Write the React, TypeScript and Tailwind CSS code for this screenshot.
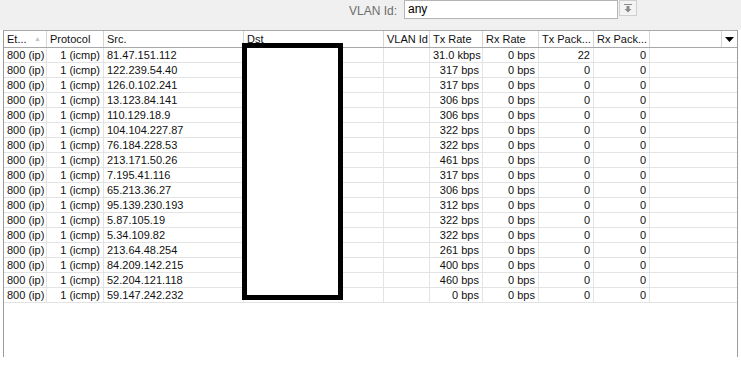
const rows: [string, string, string][] = [
  ['81.47.151.112', '31.0 kbps', '22'],
  ['122.239.54.40', '317 bps', '0'],
  ['126.0.102.241', '317 bps', '0'],
  ['13.123.84.141', '306 bps', '0'],
  ['110.129.18.9', '306 bps', '0'],
  ['104.104.227.87', '322 bps', '0'],
  ['76.184.228.53', '322 bps', '0'],
  ['213.171.50.26', '461 bps', '0'],
  ['7.195.41.116', '317 bps', '0'],
  ['65.213.36.27', '306 bps', '0'],
  ['95.139.230.193', '312 bps', '0'],
  ['5.87.105.19', '322 bps', '0'],
  ['5.34.109.82', '322 bps', '0'],
  ['213.64.48.254', '261 bps', '0'],
  ['84.209.142.215', '400 bps', '0'],
  ['52.204.121.118', '460 bps', '0'],
  ['59.147.242.232', '0 bps', '0'],
];

const cols = 'grid grid-cols-[43px_57px_140px_140px_46px_53px_56px_55px_56px_1fr]';

function HeaderCell({ children, last }: { children?: React.ReactNode; last?: boolean }) {
  return (
    <div className={`h-[16px] px-[3px] leading-[16px] whitespace-nowrap overflow-hidden ${last ? '' : 'border-r border-[#d5d5d5]'}`}>
      {children}
    </div>
  );
}

function Cell({ children, right }: { children?: React.ReactNode; right?: boolean }) {
  return (
    <div className={`h-[14px] px-[3px] leading-[14px] whitespace-nowrap border-r border-[#e3e3e3] ${right ? 'text-right' : ''}`}>
      {children}
    </div>
  );
}

export default function App() {
  return (
    <div className="w-[741px] h-[366px] bg-white text-[11px] text-[#111] font-['Liberation_Sans',Arial,sans-serif] overflow-hidden">
      <div className="h-[30px] bg-[#f0f0f0] flex justify-end items-start pr-[104px]">
        <span className="text-[12px] text-[#6d6d6d] mt-[2px] mr-[7px]">VLAN Id:</span>
        <div className="w-[214px] h-[19px] border border-[#b5b5b5] bg-white text-[12px] text-black pl-[3px] leading-[17px]">
          any
        </div>
        <div className="w-[18px] h-[16px] ml-[1px] border border-[#cfcfcf] bg-[#f3f3f3] flex items-center justify-center">
          <svg width="8" height="9" viewBox="0 0 8 9">
            <rect x="0" y="0" width="8" height="1" fill="#8a8a8a" />
            <path d="M2.5 2h3v3h2L4 8.5 0.5 5h2z" fill="#8a8a8a" />
          </svg>
        </div>
      </div>

      <div className="relative mx-[3px] h-[327px] border-l border-r border-[#9c9c9c]">
        <div className={`${cols} border-t border-b border-[#a8a8a8] bg-white`}>
          <HeaderCell>
            <span className="flex justify-between">
              Et...<span className="text-[7px] text-[#c4c4c4] mr-[2px]">&#9650;</span>
            </span>
          </HeaderCell>
          <HeaderCell>Protocol</HeaderCell>
          <HeaderCell>Src.</HeaderCell>
          <HeaderCell>Dst</HeaderCell>
          <HeaderCell>VLAN Id</HeaderCell>
          <HeaderCell>Tx Rate</HeaderCell>
          <HeaderCell>Rx Rate</HeaderCell>
          <HeaderCell>Tx Pack...</HeaderCell>
          <HeaderCell>Rx Pack...</HeaderCell>
          <div className="flex h-[16px]">
            <div className="flex-1 border-r border-[#d5d5d5]" />
            <div className="w-[15px] flex items-center justify-center">
              <svg width="9" height="5" viewBox="0 0 9 5">
                <path d="M0 0h9L4.5 5z" fill="#000" />
              </svg>
            </div>
          </div>
        </div>

        {rows.map(([src, tx, txp], i) => (
          <div key={i} className={`${cols} border-b border-[#e3e3e3]`}>
            <Cell>800 (ip)</Cell>
            <Cell right>1 (icmp)</Cell>
            <Cell>{src}</Cell>
            <Cell />
            <Cell />
            <Cell right>{tx}</Cell>
            <Cell right>0 bps</Cell>
            <Cell right>{txp}</Cell>
            <Cell right>0</Cell>
            <div className="h-[14px]" />
          </div>
        ))}

        <div className="absolute left-[238px] top-[13px] w-[101px] h-[257px] border-[5px] border-black bg-white" />
      </div>
    </div>
  );
}
